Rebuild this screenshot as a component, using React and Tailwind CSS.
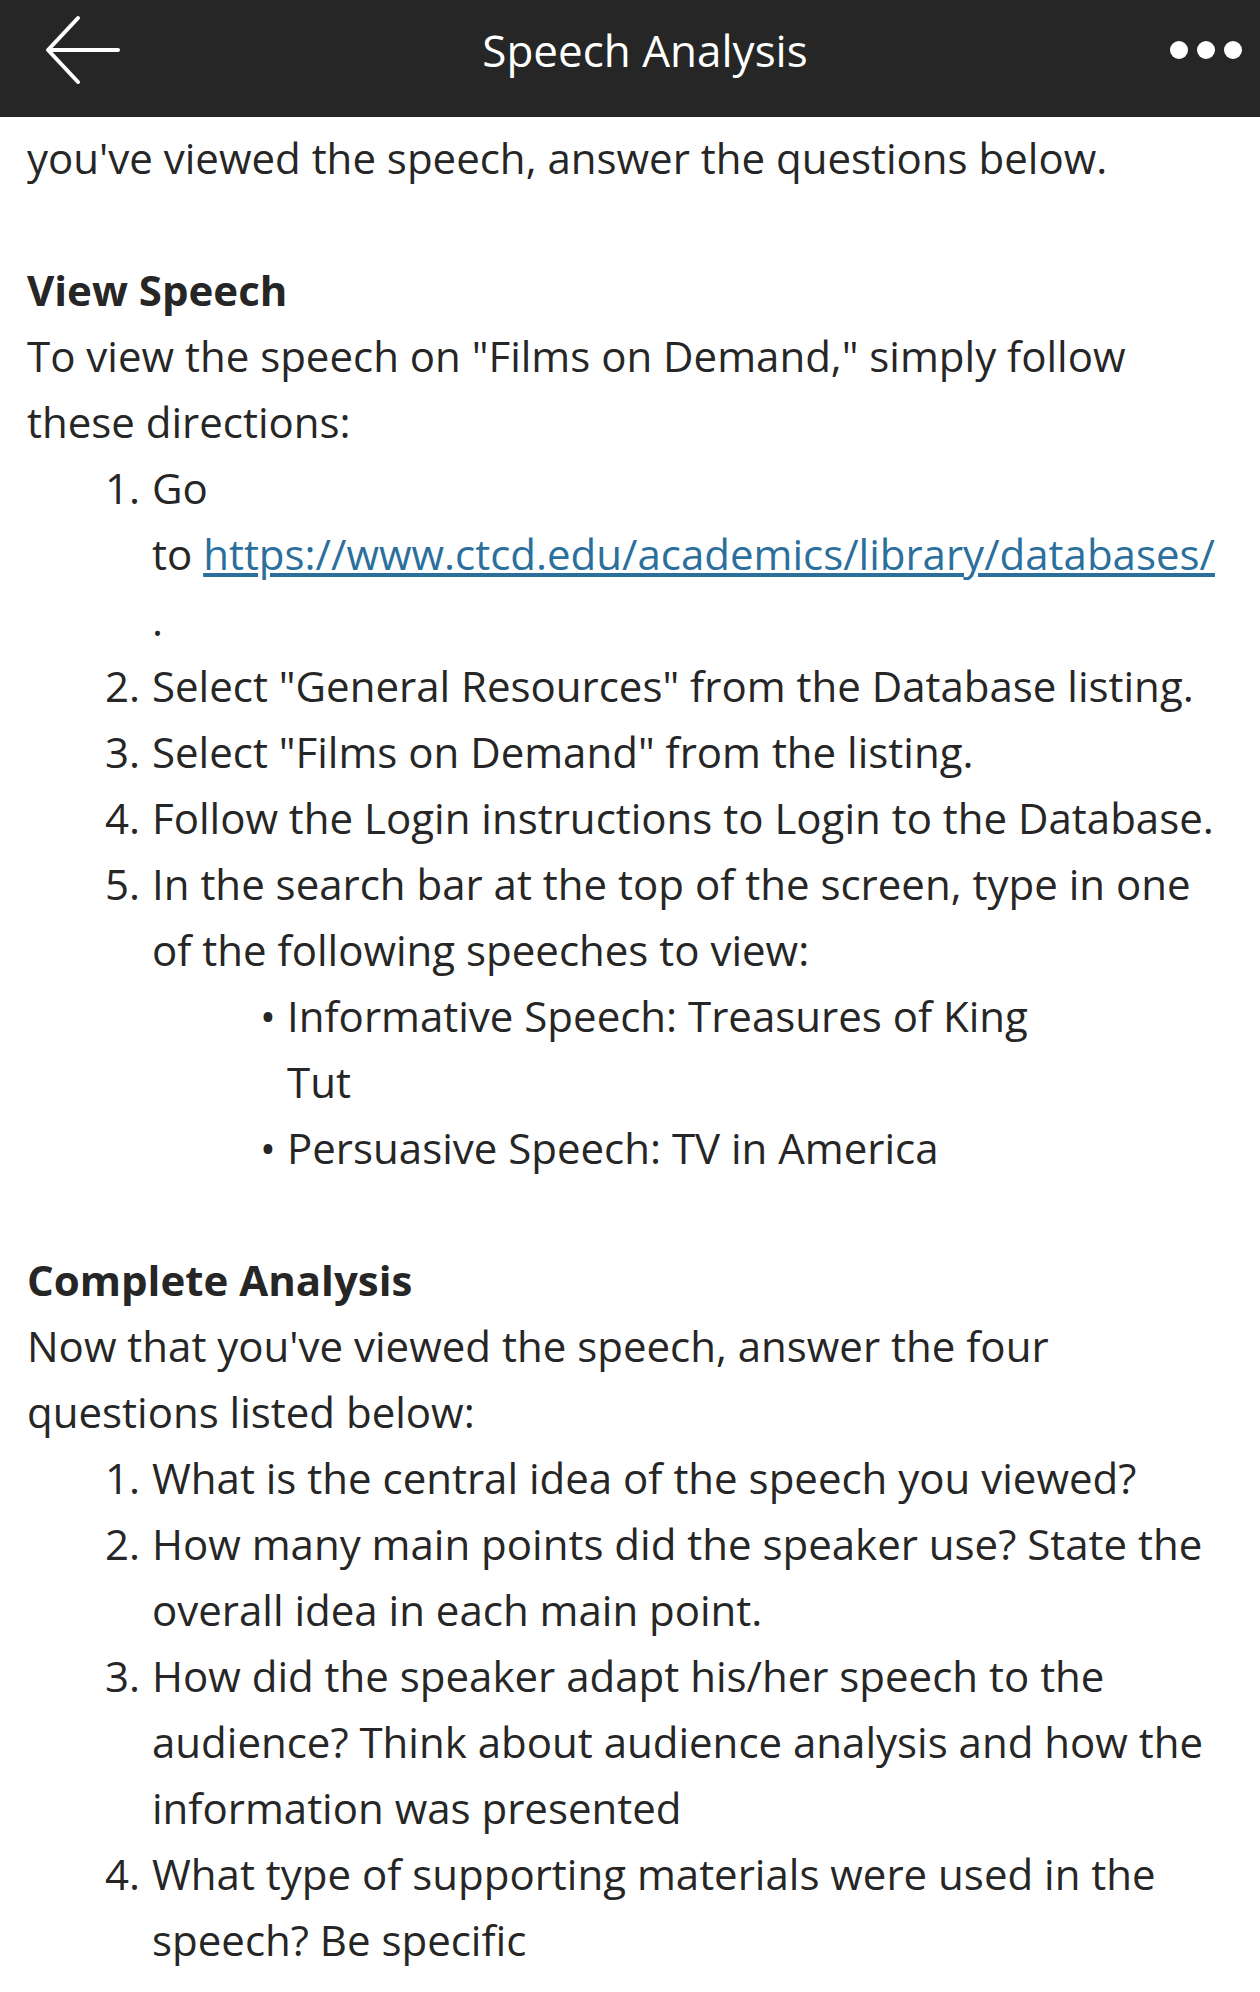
import React from 'react';

const ArrowLeft = () => (
    <svg width="80" height="70" viewBox="0 0 80 70" fill="none" stroke="white" strokeWidth="4" strokeLinecap="round" strokeLinejoin="round">
        <path d="M34 3 L4 35 L34 67" />
        <path d="M5 35 H74" />
    </svg>
);

const Dots = () => (
    <div className="flex items-center gap-[9px]">
        <span className="w-[18px] h-[18px] rounded-full bg-white" />
        <span className="w-[18px] h-[18px] rounded-full bg-white" />
        <span className="w-[18px] h-[18px] rounded-full bg-white" />
    </div>
);

const NumItem = ({ n, children }) => (
    <div className="flex">
        <span className="w-[47px] shrink-0">{n}.</span>
        <div className="flex-1">{children}</div>
    </div>
);

const Bullet = ({ children }) => (
    <div className="flex">
        <span className="w-[27px] shrink-0">•</span>
        <div className="flex-1">{children}</div>
    </div>
);

const App = () => {
    return (
        <div className="w-[1260px] min-h-[1992px] bg-white" style={{ fontFamily: '"Open Sans", "Noto Sans", sans-serif' }}>
            {/* top bar */}
            <div className="h-[117px] bg-[#262626]">
                <div className="h-[100px] flex items-center">
                    <div className="w-[130px] pl-[44px] flex items-center">
                        <ArrowLeft />
                    </div>
                    <div className="flex-1 text-center text-white text-[44px] pl-[30px]">Speech Analysis</div>
                    <div className="w-[130px] flex justify-end pr-[18px]">
                        <Dots />
                    </div>
                </div>
            </div>

            {/* content */}
            <div className="pt-[8px] px-[27px] text-[42px] leading-[66px] text-[#262626]">
                <p>you've viewed the speech, answer the questions below.</p>
                <p className="h-[66px]" />

                <p className="font-bold">View Speech</p>
                <p>To view the speech on "Films on Demand," simply follow<br />these directions:</p>

                <div className="pl-[78px]">
                    <NumItem n={1}>
                        Go<br />
                        to <a className="text-[#2b6f9c] underline">https://www.ctcd.edu/academics/library/databases/</a><br />
                        .
                    </NumItem>
                    <NumItem n={2}>Select "General Resources" from the Database listing.</NumItem>
                    <NumItem n={3}>Select "Films on Demand" from the listing.</NumItem>
                    <NumItem n={4}>Follow the Login instructions to Login to the Database.</NumItem>
                    <NumItem n={5}>
                        In the search bar at the top of the screen, type in one<br />of the following speeches to view:
                        <div className="pl-[108px]">
                            <Bullet>Informative Speech: Treasures of King<br />Tut</Bullet>
                            <Bullet>Persuasive Speech: TV in America</Bullet>
                        </div>
                    </NumItem>
                </div>
                <p className="h-[66px]" />

                <p className="font-bold">Complete Analysis</p>
                <p>Now that you've viewed the speech, answer the four<br />questions listed below:</p>

                <div className="pl-[78px]">
                    <NumItem n={1}>What is the central idea of the speech you viewed?</NumItem>
                    <NumItem n={2}>How many main points did the speaker use? State the<br />overall idea in each main point.</NumItem>
                    <NumItem n={3}>How did the speaker adapt his/her speech to the<br />audience? Think about audience analysis and how the<br />information was presented</NumItem>
                    <NumItem n={4}>What type of supporting materials were used in the<br />speech? Be specific</NumItem>
                </div>
            </div>
        </div>
    );
};

export default App;
